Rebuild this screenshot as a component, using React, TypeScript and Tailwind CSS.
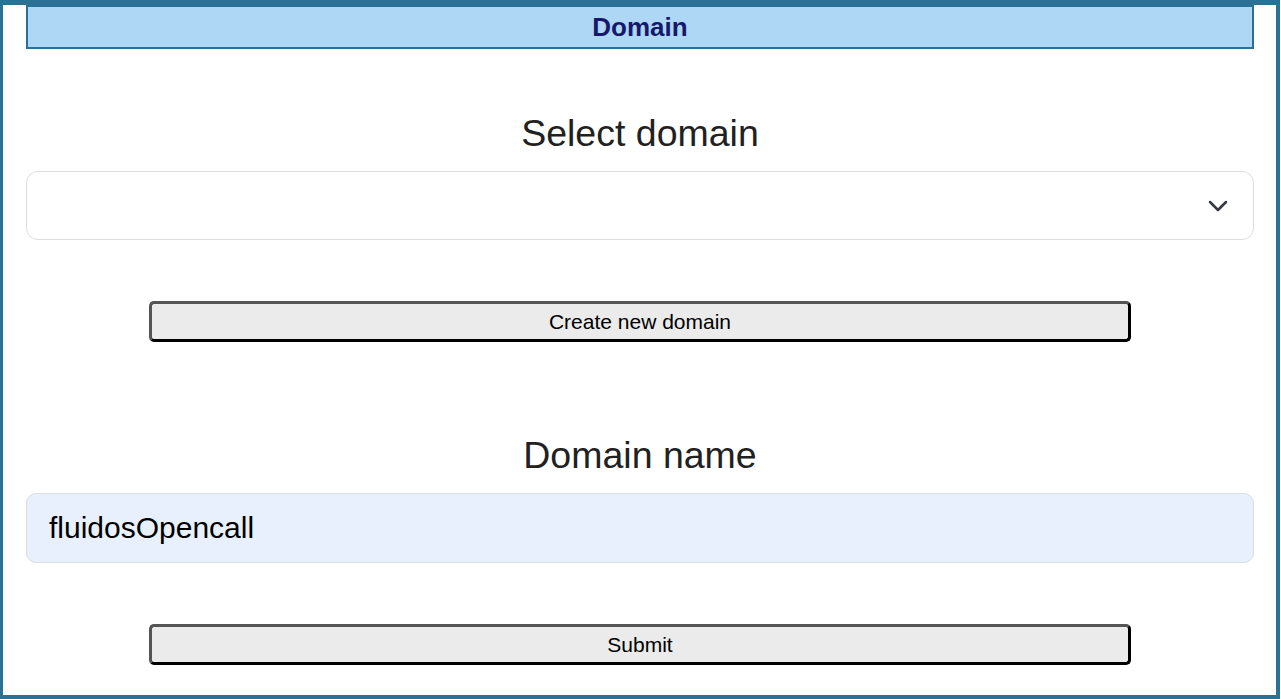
import React, { useState } from 'react';
import { ChevronDown } from 'lucide-react';

const font = { fontFamily: '"Liberation Sans", Arial, sans-serif' };

const FormButton: React.FC<{ label: string }> = ({ label }) => (
    <button
        type="button"
        className="w-4/5 mx-auto block h-[41px] bg-[#ebebeb] rounded-[5px] border-[3px] border-t-[#555555] border-l-[#555555] border-r-black border-b-black text-[21px] leading-none text-black"
    >
        {label}
    </button>
);

const App = () => {
    const [domain, setDomain] = useState<string>('');
    const [name, setName] = useState<string>('fluidosOpencall');

    return (
        <div style={font} className="w-[1280px] h-[699px] bg-white border-l-[3px] border-t-[5px] border-r-4 border-b-4 border-[#2b7095] flex flex-col pl-[23px] pr-[22px]">
            <div className="h-[44px] shrink-0 bg-[#aed6f5] border-2 border-[#2b7095] flex items-center justify-center">
                <span className="text-[26px] font-bold text-[#16196b] leading-none">Domain</span>
            </div>

            <div className="mt-[63px] text-center text-[37.5px] leading-[42px] text-[#212121]">Select domain</div>

            <div className="relative mt-[17px]">
                <select
                    value={domain}
                    onChange={(e) => setDomain(e.target.value)}
                    className="appearance-none w-full h-[69px] rounded-[12px] border border-[#dedede] bg-white px-5 text-[24px] text-[#212121] outline-none"
                >
                    <option value=""></option>
                    <option value="fluidosOpencall">fluidosOpencall</option>
                </select>
                <ChevronDown className="absolute right-[20px] top-1/2 -translate-y-1/2 pointer-events-none text-[#343a40]" size={32} strokeWidth={1.9} />
            </div>

            <div className="mt-[61px]">
                <FormButton label="Create new domain" />
            </div>

            <div className="mt-[92px] text-center text-[37.5px] leading-[42px] text-[#212121]">Domain name</div>

            <input
                value={name}
                onChange={(e) => setName(e.target.value)}
                className="mt-[17px] w-full h-[70px] rounded-[10px] border border-[#dedede] bg-[#e8f0fe] px-[22px] text-[30px] text-black outline-none"
            />

            <div className="mt-[61px]">
                <FormButton label="Submit" />
            </div>
        </div>
    );
};

export default App;
